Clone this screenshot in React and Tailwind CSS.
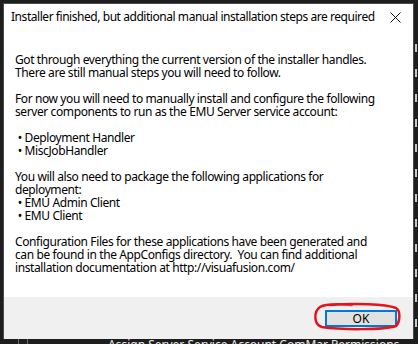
import React from "react";

function Ticks() {
  // slivers of the window behind, seen down the right edge
  const ys = [0, 1, 2, 3, 4, 5, 6, 7, 8, 9, 10, 11];
  return (
    <div className="flex flex-col gap-[17px] pt-[44px] pl-[1px]">
      {ys.map((i) => (
        <div key={i} className="w-[2px] h-[8px] bg-[#c8c8c8]" />
      ))}
    </div>
  );
}

function Line({ children }) {
  return <div className="h-[13px] whitespace-pre">{children}</div>;
}

export default function App() {
  return (
    <div className="relative w-[418px] h-[344px] overflow-hidden bg-[#1e1e1e] font-['Noto_Sans',sans-serif]">
      <div className="flex h-[339px]">
        <div className="w-[3px] shrink-0 bg-[#1e1e1e]" />
        <div className="flex flex-col w-[411px] shrink-0 pt-[3px]">
          <div className="flex flex-col flex-1 border-l border-r border-t border-[#4b4b4b] bg-white text-black">
            <div className="flex items-center justify-between h-[26px] pl-[7px] pr-[9px]">
              <span className="text-[12px] tracking-[-0.45px] leading-[14px] whitespace-nowrap">
                Installer finished, but additional manual installation steps are required
              </span>
              <svg width="11" height="11" viewBox="0 0 11 11" className="mr-[3px] shrink-0">
                <path d="M0.5 0.5 L10.5 10.5 M10.5 0.5 L0.5 10.5" stroke="#111" strokeWidth="1" />
              </svg>
            </div>
            <div className="flex-1 pl-[11px] pt-[23px] text-[12px] leading-[13px] tracking-[-0.4px]">
              <Line>Got through everything the current version of the installer handles.</Line>
              <Line>There are still manual steps you will need to follow.</Line>
              <Line> </Line>
              <Line>For now you will need to manually install and configure the following</Line>
              <Line>server components to run as the EMU Server service account:</Line>
              <Line> </Line>
              <Line> • Deployment Handler</Line>
              <Line> • MiscJobHandler</Line>
              <Line> </Line>
              <Line>You will also need to package the following applications for</Line>
              <Line>deployment:</Line>
              <Line> • EMU Admin Client</Line>
              <Line> • EMU Client</Line>
              <Line> </Line>
              <Line>Configuration Files for these applications have been generated and</Line>
              <Line>can be found in the AppConfigs directory.  You can find additional</Line>
              <Line>installation documentation at http://visuafusion.com/</Line>
            </div>
            <div className="flex justify-end items-center h-[42px] bg-[#f0f0f0] pr-[16px]">
              <button className="w-[72px] h-[17px] border-2 border-[#0078d7] bg-[#e1e1e1] text-[12px] leading-[13px] text-black">
                OK
              </button>
            </div>
          </div>
        </div>
        <Ticks />
      </div>
      <div className="flex h-[5px]">
        <div className="w-[18px] shrink-0" />
        <div className="w-px h-[5px] shrink-0 bg-[#6a6a6a]" />
        <div className="w-[8px] shrink-0" />
        <div className="w-px h-[5px] shrink-0 bg-[#6a6a6a]" />
        <div className="pl-[80px] shrink-0 -mt-[1px] text-[12px] leading-[14px] text-[#e8e8e8] whitespace-nowrap">
          Assign Server Service Account ComMar Permissions.
        </div>
      </div>
      <svg
        className="absolute left-0 top-0 pointer-events-none"
        width="418"
        height="344"
        viewBox="0 0 418 344"
      >
        <path
          d="M330 305 C355 303 385 304 396 308 C401 311 400 322 396 326 C385 330 340 330 322 327 C314 325 313 312 320 307 C325 304 340 304 352 305"
          fill="none"
          stroke="#e5141c"
          strokeWidth="2.5"
          strokeLinecap="round"
        />
      </svg>
    </div>
  );
}
